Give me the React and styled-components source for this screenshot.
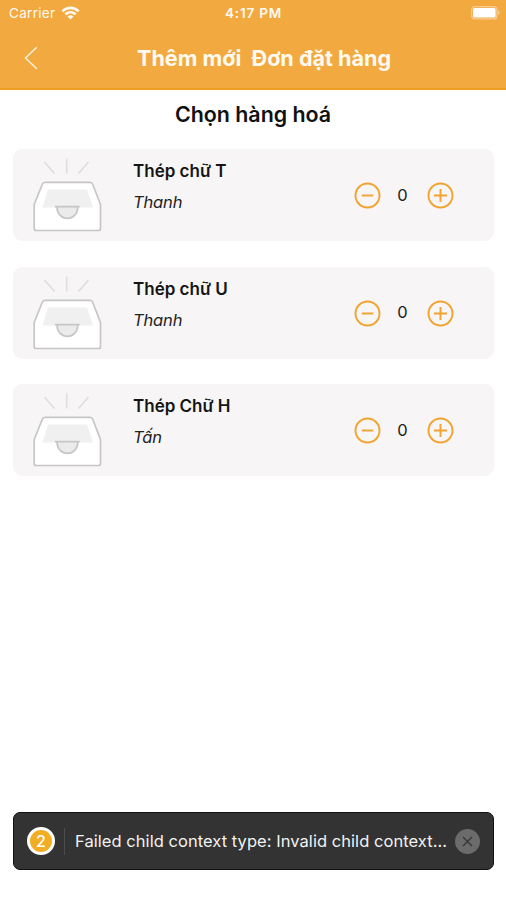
import React from "react"
import styled, { createGlobalStyle } from "styled-components"

const GlobalStyle = createGlobalStyle`
  * {
    box-sizing: border-box;
  }
  body {
    margin: 0;
    background: #fff;
    font-family: Inter, "Liberation Sans", sans-serif;
  }
`

const products = [
  { id: 1, name: "Thép chữ T", unit: "Thanh" },
  { id: 2, name: "Thép chữ U", unit: "Thanh" },
  { id: 3, name: "Thép Chữ H", unit: "Tấn" },
]

const WifiIcon = () => (
  <svg width="19" height="14" viewBox="0 0 19 14" fill="#fffaf0">
    <path d="M0.4 4.4C5.4-.7 13.6-.7 18.6 4.4L16.7 6.3C12.7 2.3 6.3 2.3 2.3 6.3Z" />
    <path d="M3.5 7.4C6.8 4.1 12.2 4.1 15.5 7.4L13.6 9.3C11.3 7 7.7 7 5.4 9.3Z" />
    <path d="M6.5 10.4C8.2 8.8 10.8 8.8 12.5 10.4L9.5 13.4Z" />
  </svg>
)

const BatteryIcon = () => (
  <svg width="30" height="14" viewBox="0 0 30 14">
    <rect x="0.7" y="0.7" width="25.2" height="12.2" rx="3" fill="none" stroke="#f8cd92" strokeWidth="1.2" />
    <rect x="2" y="2" width="22.6" height="9.6" rx="1.5" fill="#fff" />
    <path d="M27 4.6C29.1 5.2 29.1 8.4 27 9Z" fill="#f8cd92" />
  </svg>
)

const BackIcon = () => (
  <svg width="14" height="24" viewBox="0 0 14 24" fill="none" stroke="#fff3df" strokeWidth="1.5">
    <path d="M12.8 1.2L1.5 12L12.8 22.8" />
  </svg>
)

//Empty box placeholder used when a product has no picture
const EmptyBox = () => (
  <svg width="70" height="74" viewBox="0 0 70 74" fill="none">
    <g stroke="#dedede" strokeWidth="1.6">
      <path d="M11.5 4L21.5 15.5" />
      <path d="M33.7 0.5V15.5" />
      <path d="M55.5 4L45.5 15.5" />
    </g>
    <path
      d="M12 24.3H57Q59 24.3 59.7 26.3L67.5 46.5V70.5Q67.5 72.5 65.5 72.5H3.2Q1.2 72.5 1.2 70.5V46.5L9.3 26.3Q10 24.3 12 24.3Z"
      fill="#fff"
      stroke="#c6c6c6"
      strokeWidth="1.7"
      strokeLinejoin="round"
    />
    <path d="M15 31.5H54L60 49.5H9.5Z" fill="#f0f0f0" />
    <path d="M22 48.7H46.6M24 48.7C24 64.3 44.8 64.3 44.8 48.7" fill="#ebebeb" stroke="#c6c6c6" strokeWidth="1.7" />
  </svg>
)

const RoundIcon = ({ plus }) => (
  <svg width="27" height="27" viewBox="0 0 27 27" fill="none" stroke="#f2a32f">
    <circle cx="13.5" cy="13.5" r="12" strokeWidth="1.9" />
    <path d={plus ? "M7 13.5H20M13.5 7V20" : "M7.8 13.5H19.2"} strokeWidth="1.9" />
  </svg>
)

const CloseIcon = () => (
  <svg width="11" height="11" viewBox="0 0 11 11" stroke="#353535" strokeWidth="1.2">
    <path d="M1 1L10 10M10 1L1 10" />
  </svg>
)

const App = () => {
  return (
    <Screen>
      <GlobalStyle />
      <Header>
        <StatusBar>
          <Carrier>
            Carrier
            <WifiIcon />
          </Carrier>
          <Time>4:17 PM</Time>
          <Battery>
            <BatteryIcon />
          </Battery>
        </StatusBar>
        <NavBar>
          <BackBtn aria-label="Back">
            <BackIcon />
          </BackBtn>
          <Title>Thêm mới&nbsp; Đơn đặt hàng</Title>
        </NavBar>
      </Header>
      <Heading>Chọn hàng hoá</Heading>
      <List>
        {products.map(product => (
          <Card key={product.id}>
            <EmptyBox />
            <Info>
              <Name>{product.name}</Name>
              <Unit>{product.unit}</Unit>
            </Info>
            <Stepper>
              <StepBtn>
                <RoundIcon />
              </StepBtn>
              <Count>0</Count>
              <StepBtn>
                <RoundIcon plus />
              </StepBtn>
            </Stepper>
          </Card>
        ))}
      </List>
      <Warning>
        <Badge>2</Badge>
        <Message>Failed child context type: Invalid child context...</Message>
        <CloseBtn aria-label="Close">
          <CloseIcon />
        </CloseBtn>
      </Warning>
    </Screen>
  )
}

const Screen = styled.main`
  display: flex;
  flex-direction: column;
  width: 506px;
  height: 900px;
  padding-bottom: 30px;
  overflow: hidden;
  background: #fff;
`

const Header = styled.header`
  height: 90px;
  background: #f2a940;
  border-bottom: 2px solid #ee9f20;
  color: #fffaf0;
`

const StatusBar = styled.div`
  display: grid;
  grid-template-columns: 1fr auto 1fr;
  align-items: center;
  height: 26px;
  padding: 0 5px 0 9px;
`

const Carrier = styled.div`
  display: flex;
  align-items: center;
  gap: 6px;
  font-size: 13.5px;
  letter-spacing: 0.3px;
`

const Time = styled.div`
  margin-right: 3px;
  font-size: 13.5px;
  font-weight: 600;
  letter-spacing: 0.8px;
`

const Battery = styled.div`
  display: flex;
  justify-content: flex-end;
`

const NavBar = styled.nav`
  display: flex;
  align-items: center;
  height: 64px;
  padding-left: 24px;
`

const BackBtn = styled.button`
  display: flex;
  padding: 0;
  border: 0;
  background: none;
`

const Title = styled.h1`
  margin: 0 0 0 99px;
  font-size: 21.6px;
  font-weight: 700;
  white-space: nowrap;
`

const Heading = styled.h2`
  margin: 9.5px 0 21.5px;
  font-size: 21.4px;
  font-weight: 600;
  line-height: 28px;
  text-align: center;
  color: #111;
`

const List = styled.section`
  display: flex;
  flex-direction: column;
  gap: 25.5px;
  padding: 0 12px 0 13px;
`

const Card = styled.article`
  display: flex;
  align-items: flex-start;
  height: 92px;
  padding: 9px 40.5px 0 20px;
  border-radius: 9px;
  background: #f7f5f6;
`

const Info = styled.div`
  flex: 1;
  padding: 2px 0 0 30px;
`

const Name = styled.h3`
  margin: 0;
  font-size: 17px;
  font-weight: 600;
  line-height: 23px;
  color: #151515;
`

const Unit = styled.p`
  margin: 8px 0 0;
  font-size: 16.5px;
  font-style: italic;
  line-height: 22px;
  letter-spacing: -0.15px;
  color: #222;
`

const Stepper = styled.div`
  display: flex;
  align-items: center;
  padding-top: 24px;
`

const StepBtn = styled.button`
  display: flex;
  padding: 0;
  border: 0;
  background: none;
`

const Count = styled.span`
  width: 46px;
  padding: 0 2px 2px 0;
  font-size: 16.5px;
  text-align: center;
  color: #222;
`

const Warning = styled.aside`
  display: flex;
  align-items: center;
  height: 58px;
  margin: auto 12px 0 13px;
  padding: 0 13px;
  border: 1px solid #111;
  border-radius: 7px;
  background: #333;
`

const Badge = styled.div`
  display: flex;
  align-items: center;
  justify-content: center;
  width: 28px;
  height: 28px;
  border: 3px solid #fff;
  border-radius: 50%;
  background: #f2ad24;
  color: #fff;
  font-size: 16px;
  font-weight: 500;
`

const Message = styled.p`
  flex: 1;
  margin: 0 0 0 9px;
  padding-left: 10px;
  border-left: 1px solid #4d4d4d;
  font-size: 16.5px;
  line-height: 27px;
  letter-spacing: 0.05px;
  white-space: nowrap;
  color: #f2f2f2;
`

const CloseBtn = styled.button`
  display: flex;
  align-items: center;
  justify-content: center;
  width: 25px;
  height: 25px;
  padding: 0;
  border: 0;
  border-radius: 50%;
  background: #6b6b6b;
`

export default App
